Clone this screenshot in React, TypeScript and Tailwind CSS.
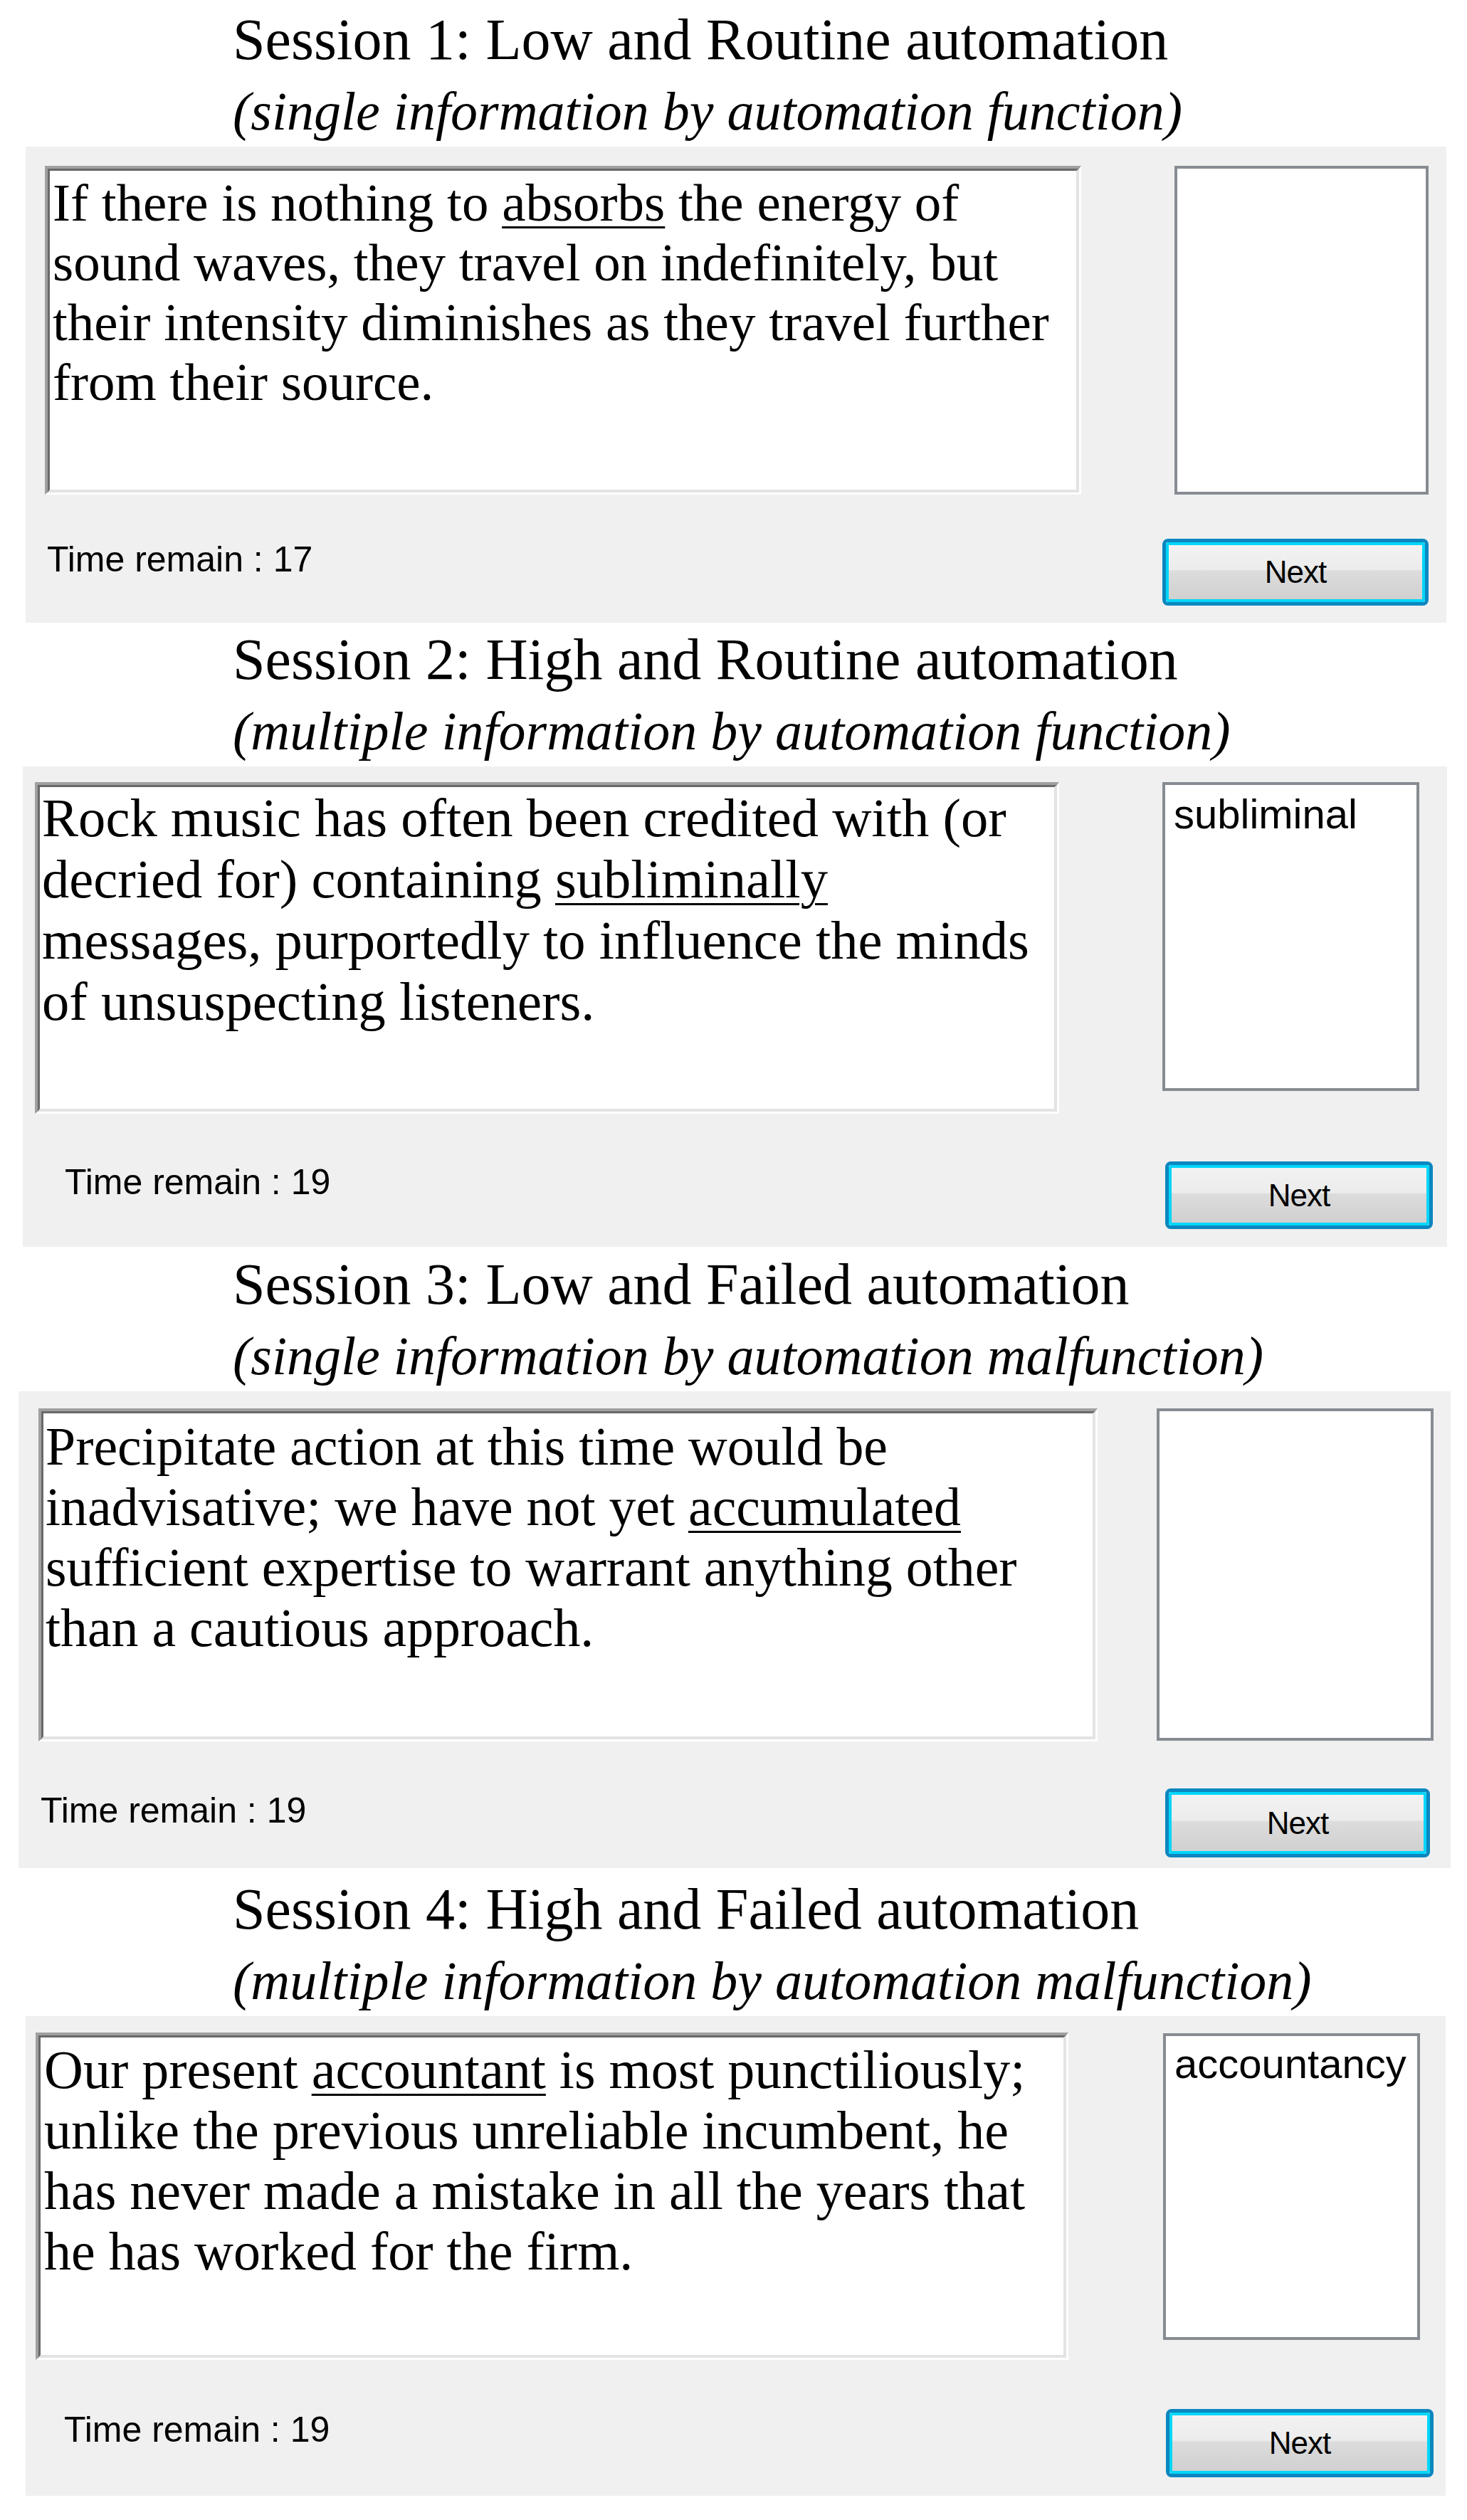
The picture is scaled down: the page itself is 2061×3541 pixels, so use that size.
import type { ReactNode } from "react";

type Session = {
  title: string;
  subtitle: string;
  lines: ReactNode[];
  word?: string;
  time: string;
  section: string;
  panel: string;
  box: string;
  text: string;
  side: string;
  sideText: string;
  bottom: string;
  timeText: string;
  button: string;
};

const u = (w: string) => (
  <span className="underline decoration-[3px] underline-offset-[8px]">{w}</span>
);

const sessions: Session[] = [
  {
    title: "Session 1: Low and Routine automation",
    subtitle: "(single information by automation function)",
    lines: [
      <>If there is nothing to {u("absorbs")} the energy of</>,
      "sound waves, they travel on indefinitely, but",
      "their intensity diminishes as they travel further",
      "from their source.",
    ],
    time: "17",
    section: "pt-[6px]",
    panel: "ml-[36px] w-[1996px] h-[669px] pl-[27px] pt-[27px]",
    box: "w-[1456px] h-[462px]",
    text: "pl-[4px] pt-[3px] text-[75px] leading-[84px]",
    side: "ml-[131px] w-[357px] h-[462px]",
    sideText: "pl-[12px] pt-[8px]",
    bottom: "mt-[62px] pr-[25px]",
    timeText: "ml-[3px] mt-[0px]",
    button: "w-[374px] h-[94px]",
  },
  {
    title: "Session 2: High and Routine automation",
    subtitle: "(multiple information by automation function)",
    lines: [
      "Rock music has often been credited with (or",
      <>decried for) containing {u("subliminally")}</>,
      "messages, purportedly to influence the minds",
      "of unsuspecting listeners.",
    ],
    word: "subliminal",
    time: "19",
    section: "mt-[2px]",
    panel: "ml-[32px] w-[2001px] h-[675px] pl-[17px] pt-[22px]",
    box: "w-[1439px] h-[466px]",
    text: "pl-[3px] pt-[1px] text-[76.6px] leading-[86px]",
    side: "ml-[145px] w-[361px] h-[434px]",
    sideText: "pl-[12px] pt-[8px]",
    bottom: "mt-[67px] pr-[20px]",
    timeText: "ml-[42px] mt-[0px]",
    button: "w-[376px] h-[95px]",
  },
  {
    title: "Session 3: Low and Failed automation",
    subtitle: "(single information by automation malfunction)",
    lines: [
      "Precipitate action at this time would be",
      <>inadvisative; we have not yet {u("accumulated")}</>,
      "sufficient expertise to warrant anything other",
      "than a cautious approach.",
    ],
    time: "19",
    section: "mt-[3px]",
    panel: "ml-[26px] w-[2012px] h-[670px] pl-[28px] pt-[24px]",
    box: "w-[1488px] h-[468px]",
    text: "pl-[3px] pt-[4px] text-[75.8px] leading-[85px]",
    side: "ml-[83px] w-[389px] h-[467px]",
    sideText: "pl-[12px] pt-[8px]",
    bottom: "mt-[66px] pr-[29px]",
    timeText: "ml-[3px] mt-[2px]",
    button: "w-[372px] h-[97px]",
  },
  {
    title: "Session 4: High and Failed automation",
    subtitle: "(multiple information by automation malfunction)",
    lines: [
      <>Our present {u("accountant")} is most punctiliously;</>,
      "unlike the previous unreliable incumbent, he",
      "has never made a mistake in all the years that",
      "he has worked for the firm.",
    ],
    word: "accountancy",
    time: "19",
    section: "mt-[8px] pb-[34px]",
    panel: "ml-[36px] w-[1995px] h-[674px] pl-[14px] pt-[23px]",
    box: "w-[1451px] h-[460px]",
    text: "pl-[5px] pt-[3px] text-[76px] leading-[85px]",
    side: "ml-[133px] mt-[1px] w-[361px] h-[431px]",
    sideText: "pl-[12px] pt-[6px]",
    bottom: "mt-[69px] pr-[17px]",
    timeText: "ml-[40px] mt-[0px]",
    button: "w-[376px] h-[96px]",
  },
];

function SessionBlock({ s }: { s: Session }) {
  return (
    <section className={s.section}>
      {/* Heading */}
      <div className="pl-[327px] font-['Liberation_Serif',serif] text-black">
        <p className="text-[82px] leading-[100px] whitespace-nowrap">{s.title}</p>
        <p className="text-[76px] leading-[100px] italic whitespace-nowrap">{s.subtitle}</p>
      </div>

      {/* Form */}
      <div className={`bg-[#f0f0f0] flex flex-col ${s.panel}`}>
        <div className="flex items-start">
          <div
            className={`border-t-4 border-l-4 border-b-[3px] border-r-[3px] border-t-[#a0a0a0] border-l-[#a0a0a0] border-b-white border-r-white ${s.box}`}
          >
            <div className="h-full bg-white border-t-[3px] border-l-[3px] border-b-4 border-r-4 border-t-[#696969] border-l-[#696969] border-b-[#e3e3e3] border-r-[#e3e3e3]">
              <div className={`font-['Liberation_Serif',serif] text-black whitespace-nowrap ${s.text}`}>
                {s.lines.map((line, i) => (
                  <div key={i}>{line}</div>
                ))}
              </div>
            </div>
          </div>
          <div className={`bg-white border-4 border-[#878b92] ${s.side}`}>
            {s.word && (
              <div
                className={`font-['Liberation_Sans',Arial,sans-serif] text-[58px] leading-[66px] text-black ${s.sideText}`}
              >
                {s.word}
              </div>
            )}
          </div>
        </div>

        <div className={`flex items-start ${s.bottom}`}>
          <span
            className={`font-['Liberation_Sans',Arial,sans-serif] text-[50px] leading-[58px] text-black whitespace-nowrap ${s.timeText}`}
          >
            Time remain : {s.time}
          </span>
          <button
            className={`ml-auto p-0 border-[5px] border-[#0b87c0] rounded-[8px] ${s.button}`}
          >
            <div className="h-full flex items-center justify-center border-4 border-[#00d6fa] rounded-[4px] bg-[linear-gradient(to_bottom,#f2f2f2_0%,#ececec_45%,#dcdcdc_48%,#d0d0d0_100%)] font-['Liberation_Sans',Arial,sans-serif] text-[44px] tracking-[-1px] text-black">
              Next
            </div>
          </button>
        </div>
      </div>
    </section>
  );
}

export default function App() {
  return (
    <main className="w-[2061px] bg-white">
      {sessions.map((s) => (
        <SessionBlock key={s.title} s={s} />
      ))}
    </main>
  );
}
